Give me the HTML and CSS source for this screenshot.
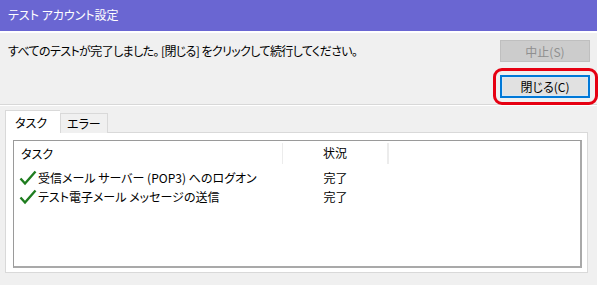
FILE: index.html
```html
<!DOCTYPE html>
<html lang="ja">
    <head>
        <meta charset="UTF-8" />
        <meta name="viewport" content="width=device-width, initial-scale=1.0" />
        <title>テスト アカウント設定</title>
        <link rel="stylesheet" href="styles.css">
    </head>
    <body>
        <div class="dialog">
            <div class="titlebar">テスト アカウント設定</div>

            <div class="top">
                <p class="message">すべてのテストが完了しました。 [閉じる] をクリックして続行してください。</p>
                <div class="buttons">
                    <button type="button" class="btn" disabled>中止(S)</button>
                    <div class="highlight">
                        <button type="button" class="btn default">閉じる(C)</button>
                        <span class="ring"></span>
                    </div>
                </div>
            </div>

            <div class="tabs">
                <div class="tab active">タスク</div>
                <div class="tab">エラー</div>
            </div>

            <div class="panel">
                <div class="listview">
                    <div class="row header">
                        <div class="col task">タスク</div>
                        <div class="col state">状況</div>
                        <div class="col rest"></div>
                    </div>
                    <div class="rows">
                        <div class="row">
                            <div class="col task">
                                <svg class="check" width="18" height="16" viewBox="0 0 18 16"><path d="M1.5 8.5 L6 13.5 L16.5 1.5" fill="none" stroke="#1f7d1f" stroke-width="2.4" /></svg>
                                受信メール サーバー (POP3) へのログオン
                            </div>
                            <div class="col state">完了</div>
                        </div>
                        <div class="row">
                            <div class="col task">
                                <svg class="check" width="18" height="16" viewBox="0 0 18 16"><path d="M1.5 8.5 L6 13.5 L16.5 1.5" fill="none" stroke="#1f7d1f" stroke-width="2.4" /></svg>
                                テスト電子メール メッセージの送信
                            </div>
                            <div class="col state">完了</div>
                        </div>
                    </div>
                </div>
            </div>
        </div>
    </body>
</html>
```

FILE: styles.css
```css
* {
    box-sizing: border-box;
}

body {
    margin: 0;
    background-color: #fff;
    font-family: "Noto Sans CJK JP", "Noto Sans", sans-serif;
    font-size: 12px;
    font-feature-settings: "palt";
    color: #000;
}

.dialog {
    width: 597px;
    height: 285px;
    background-color: #f0f0f0;
}

.titlebar {
    height: 33px;
    padding: 0 8px;
    line-height: 30px;
    color: #fff;
    background-color: #6a66d2;
    border-bottom: 2px solid #fff;
}

.top {
    display: flex;
    justify-content: space-between;
    padding: 7px 7px 0 8px;
    border-bottom: 1px solid #d8d8d8;
    box-shadow: 0 1px 0 #fff;
    height: 72px;
}

.message {
    margin: 2px 0 0;
    line-height: 18px;
    letter-spacing: -0.6px;
}

.buttons {
    display: flex;
    flex-direction: column;
    gap: 13px;
}

.btn {
    width: 90px;
    height: 22px;
    padding: 0;
    font: inherit;
    color: #000;
    background-color: #e1e1e1;
    border: 1px solid #adadad;
}

.btn:disabled {
    color: #8f8f8f;
    background-color: #cccccc;
    border-color: #bfbfbf;
}

.btn.default {
    height: 23px;
    border: 2px solid #0078d7;
    box-shadow: inset 0 0 0 1px #d6e8f7;
}

.highlight {
    position: relative;
}

.ring {
    position: absolute;
    left: -7px;
    top: -7px;
    right: -8px;
    bottom: -7px;
    border: 3px solid #e60012;
    border-radius: 9px;
}

.tabs {
    display: flex;
    align-items: flex-end;
    height: 28px;
    margin: 0 0 -1px 5px;
    position: relative;
}

.tab {
    height: 20px;
    padding: 0 0 0 6px;
    width: 48px;
    line-height: 19px;
    border: 1px solid #d9d9d9;
    border-bottom: none;
    background-color: #f0f0f0;
}

.tab.active {
    width: 55px;
    height: 23px;
    padding-left: 9px;
    line-height: 24px;
    background-color: #fff;
    border-right: none;
}

.panel {
    margin-left: 5px;
    width: 583px;
    height: 141px;
    padding: 7px 5px 4px 7px;
    background-color: #fff;
    border: 1px solid #d9d9d9;
}

.listview {
    height: 128px;
    border: 1px solid #9a9a9a;
    border-right-width: 2px;
    border-bottom-width: 2px;
    border-right-color: #a9a9a9;
    border-bottom-color: #a9a9a9;
}

.row {
    display: flex;
    height: 19px;
    line-height: 19px;
}

.row.header {
    height: 25px;
    line-height: 24px;
    margin-bottom: 2px;
}

.row.header .col {
    border-right: 1px solid #ececec;
    margin: 2px 0;
    line-height: 20px;
}

.col.task {
    width: 269px;
    padding-left: 7px;
    display: flex;
    align-items: center;
    gap: 1px;
}

.row:not(.header) .col.task {
    padding-left: 5px;
}

.col.state {
    width: 105px;
    text-align: center;
}

.col.rest {
    width: 1px;
}

.check {
    flex: none;
}
```
